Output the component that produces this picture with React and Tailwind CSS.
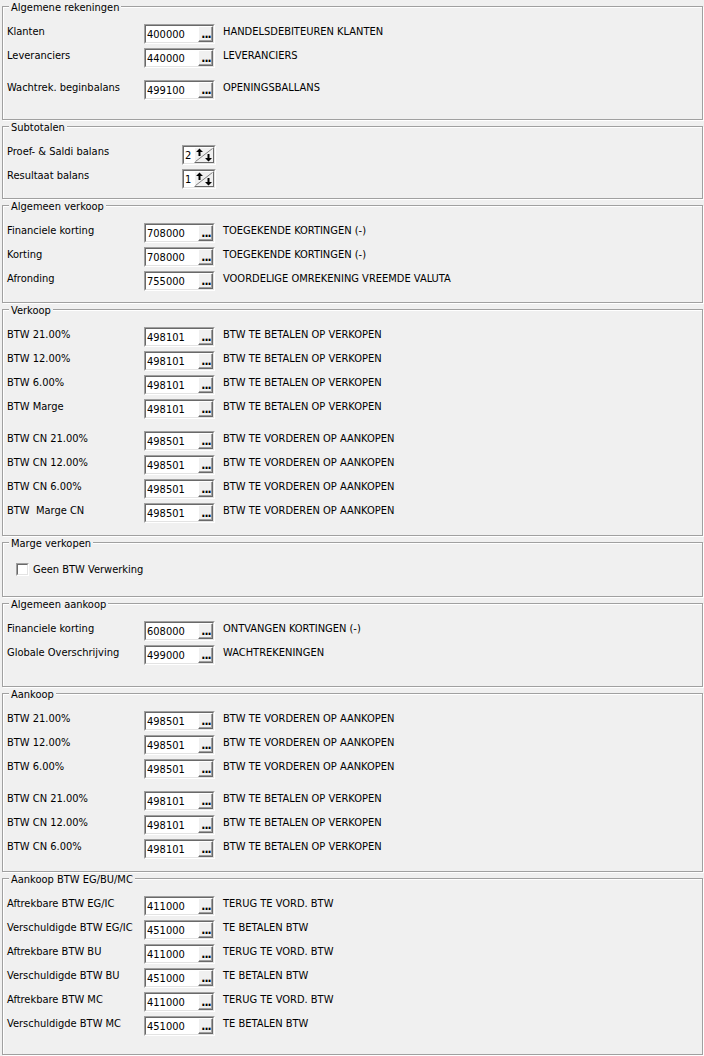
import React from 'react';

const groups = [
    {
        title: 'Algemene rekeningen',
        pb: 'pb-[19px]',
        rows: [
            { label: 'Klanten', code: '400000', desc: 'HANDELSDEBITEUREN KLANTEN' },
            { label: 'Leveranciers', code: '440000', desc: 'LEVERANCIERS' },
            { label: 'Wachtrek. beginbalans', code: '499100', desc: 'OPENINGSBALLANS', gap: true },
        ],
    },
];

const Lookup = ({ value }) => (
    <div className="flex h-[20px] w-[71px] shrink-0 border border-t-[#a0a0a0] border-l-[#a0a0a0] border-b-white border-r-white">
        <div className="flex flex-1 border border-t-[#696969] border-l-[#696969] border-b-[#e3e3e3] border-r-[#e3e3e3] bg-white">
            <span className="flex-1 pl-[1px] pt-[2px] leading-[13px] text-black">{value}</span>
            <div className="flex w-[15px] items-end justify-center border border-t-white border-l-white border-b-[#696969] border-r-[#696969] bg-[#f0f0f0] shadow-[inset_-1px_-1px_0_#a0a0a0]">
                <span className="pb-[2px] pl-[1px] text-[12px] font-bold leading-[10px] tracking-[-1px]">...</span>
            </div>
        </div>
    </div>
);

const Spin = ({ value }) => (
    <div className="ml-[38px] flex h-[20px] w-[34px] shrink-0 border border-t-[#a0a0a0] border-l-[#a0a0a0] border-b-white border-r-white">
        <div className="flex flex-1 border border-t-[#696969] border-l-[#696969] border-b-[#e3e3e3] border-r-[#e3e3e3] bg-white">
            <span className="w-[10px] pl-[1px] pt-[2px] leading-[13px]">{value}</span>
            <div className="flex w-[20px] border border-t-white border-l-white border-b-[#696969] border-r-[#696969] bg-[#f0f0f0]">
                <svg width="18" height="14" viewBox="0 0 18 14" className="block">
                    <path d="M0.5 13.5 L17.5 0.5" stroke="#808080" strokeWidth="1" fill="none" />
                    <path d="M4.5 0.5 L8 4 L5.5 4 L5.5 8 L3.5 8 L3.5 4 L1 4 Z" fill="#000" />
                    <path d="M13.5 13.5 L10 10 L12.5 10 L12.5 6 L14.5 6 L14.5 10 L17 10 Z" fill="#000" />
                </svg>
            </div>
        </div>
    </div>
);

const Row = ({ label, code, desc, gap }) => (
    <div className={`flex items-start ${gap ? 'mt-[8px]' : ''}`}>
        <span className="w-[137px] shrink-0 whitespace-pre pt-[1px] leading-[13px]">{label}</span>
        <Lookup value={code} />
        <span className="ml-[8px] pt-[1px] leading-[13px]">{desc}</span>
    </div>
);

const SpinRow = ({ label, value }) => (
    <div className="flex items-start">
        <span className="w-[137px] shrink-0 leading-[13px]">{label}</span>
        <Spin value={value} />
    </div>
);

const Group = ({ title, pt = 'pt-[10px]', pb, children }) => (
    <div className="ml-[2px] mr-[1px] border border-[#a0a0a0] shadow-[inset_1px_1px_0_#fff,1px_1px_0_#fff]">
        <div className="-mt-[6px] ml-[6px] w-fit bg-[#f0f0f0] px-[2px] leading-[13px]">{title}</div>
        <div className={`flex flex-col gap-[4px] pl-[4px] ${pt} ${pb}`}>{children}</div>
    </div>
);

const vk = 'BTW TE BETALEN OP VERKOPEN';
const ak = 'BTW TE VORDEREN OP AANKOPEN';

export default function App() {
    return (
        <div className="flex min-h-[1056px] w-[704px] flex-col gap-[6px] bg-[#f0f0f0] pt-[6px] font-['DejaVu_Sans_Condensed','Liberation_Sans',sans-serif] text-[11px] text-black [font-stretch:condensed]">
            {groups.map((g) => (
                <Group key={g.title} title={g.title} pb={g.pb}>
                    {g.rows.map((r) => (
                        <Row key={r.label} {...r} />
                    ))}
                </Group>
            ))}

            <Group title="Subtotalen" pt="pt-[11px]" pb="pb-[9px]">
                <SpinRow label="Proef- & Saldi balans" value="2" />
                <SpinRow label="Resultaat balans" value="1" />
            </Group>

            <Group title="Algemeen verkoop" pb="pb-[11px]">
                <Row label="Financiele korting" code="708000" desc="TOEGEKENDE KORTINGEN (-)" />
                <Row label="Korting" code="708000" desc="TOEGEKENDE KORTINGEN (-)" />
                <Row label="Afronding" code="755000" desc="VOORDELIGE OMREKENING VREEMDE VALUTA" />
            </Group>

            <Group title="Verkoop" pb="pb-[12px]">
                <Row label="BTW 21.00%" code="498101" desc={vk} />
                <Row label="BTW 12.00%" code="498101" desc={vk} />
                <Row label="BTW 6.00%" code="498101" desc={vk} />
                <Row label="BTW Marge" code="498101" desc={vk} />
                <Row label="BTW CN 21.00%" code="498501" desc={ak} gap />
                <Row label="BTW CN 12.00%" code="498501" desc={ak} />
                <Row label="BTW CN 6.00%" code="498501" desc={ak} />
                <Row label="BTW  Marge CN" code="498501" desc={ak} />
            </Group>

            <Group title="Marge verkopen" pt="pt-[13px]" pb="pb-[20px]">
                <label className="ml-[9px] flex items-center gap-[4px]">
                    <span className="h-[13px] w-[13px] border border-t-[#a0a0a0] border-l-[#a0a0a0] border-b-white border-r-white">
                        <span className="block h-full w-full border border-t-[#696969] border-l-[#696969] border-b-[#e3e3e3] border-r-[#e3e3e3] bg-white" />
                    </span>
                    <span className="leading-[13px]">Geen BTW Verwerking</span>
                </label>
            </Group>

            <Group title="Algemeen aankoop" pb="pb-[21px]">
                <Row label="Financiele korting" code="608000" desc="ONTVANGEN KORTINGEN (-)" />
                <Row label="Globale Overschrijving" code="499000" desc="WACHTREKENINGEN" />
            </Group>

            <Group title="Aankoop" pb="pb-[12px]">
                <Row label="BTW 21.00%" code="498501" desc={ak} />
                <Row label="BTW 12.00%" code="498501" desc={ak} />
                <Row label="BTW 6.00%" code="498501" desc={ak} />
                <Row label="BTW CN 21.00%" code="498101" desc={vk} gap />
                <Row label="BTW CN 12.00%" code="498101" desc={vk} />
                <Row label="BTW CN 6.00%" code="498101" desc={vk} />
            </Group>

            <Group title="Aankoop BTW EG/BU/MC" pb="pb-[18px]">
                <Row label="Aftrekbare BTW EG/IC" code="411000" desc="TERUG TE VORD. BTW" />
                <Row label="Verschuldigde BTW EG/IC" code="451000" desc="TE BETALEN BTW" />
                <Row label="Aftrekbare BTW BU" code="411000" desc="TERUG TE VORD. BTW" />
                <Row label="Verschuldigde BTW BU" code="451000" desc="TE BETALEN BTW" />
                <Row label="Aftrekbare BTW MC" code="411000" desc="TERUG TE VORD. BTW" />
                <Row label="Verschuldigde BTW MC" code="451000" desc="TE BETALEN BTW" />
            </Group>
        </div>
    );
}
